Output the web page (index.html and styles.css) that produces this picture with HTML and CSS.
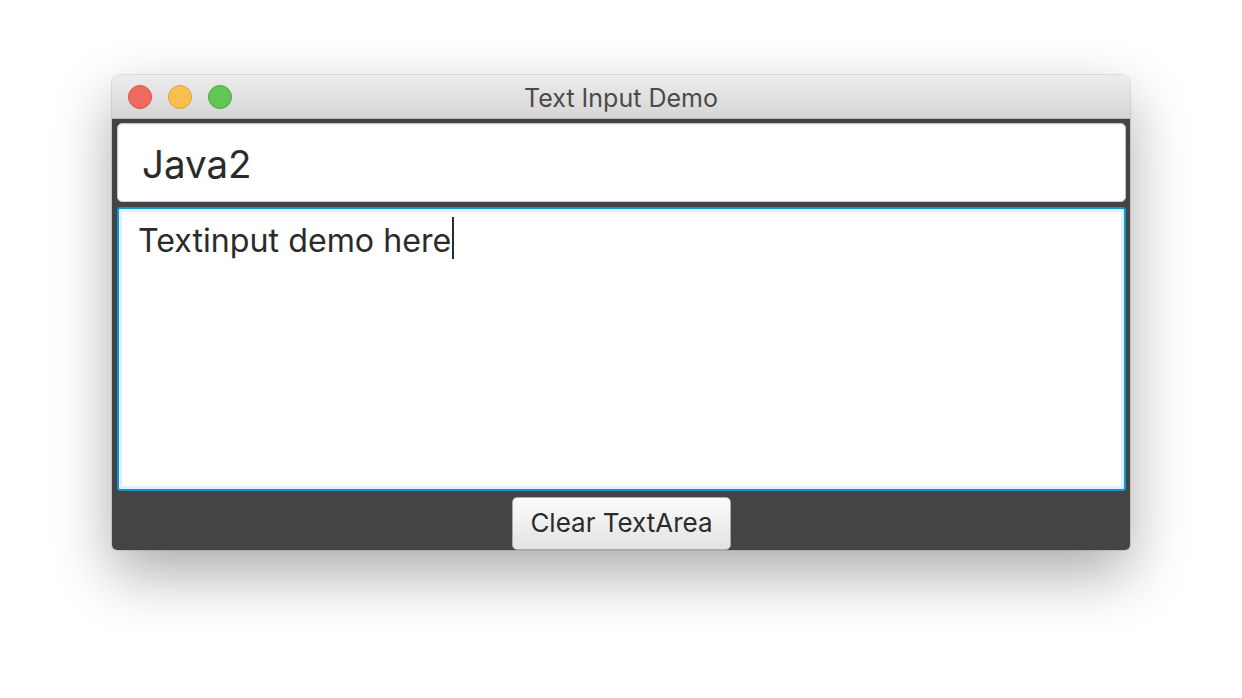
FILE: index.html
```html
<!DOCTYPE html>
<html>
<head>
<meta charset="utf-8">
<link rel="stylesheet" href="styles.css">
</head>
<body>
<div class="window">
  <div class="titlebar">
    <div class="lights">
      <span class="light red"></span>
      <span class="light yellow"></span>
      <span class="light green"></span>
    </div>
    <div class="title">Text Input Demo</div>
    <div></div>
  </div>
  <div class="content">
    <div class="field">Java2</div>
    <div class="area"><span class="areatext">Textinput demo here</span><span class="caret"></span></div>
    <div class="buttons">
      <button class="btn">Clear TextArea</button>
    </div>
  </div>
</div>
</body>
</html>
```

FILE: styles.css
```css
html, body {
  margin: 0;
  padding: 0;
  background: #ffffff;
}
body {
  width: 1242px;
  height: 698px;
  overflow: hidden;
  padding: 75px 0 0 112px;
  box-sizing: border-box;
  font-family: Inter, "Noto Sans", sans-serif;
}
.window {
  width: 1018px;
  height: 475px;
  border-radius: 8px 8px 5px 5px;
  overflow: hidden;
  box-shadow: 0 24px 60px rgba(0, 0, 0, 0.33), 0 0 0 1px rgba(0, 0, 0, 0.10);
  display: flex;
  flex-direction: column;
}
.titlebar {
  height: 46px;
  box-sizing: border-box;
  background: linear-gradient(#ececec, #d6d6d6);
  border-bottom: 1px solid #b4b4b4;
  display: grid;
  grid-template-columns: 1fr auto 1fr;
  align-items: center;
}
.lights {
  display: flex;
  gap: 16px;
  padding-left: 16px;
  padding-top: 1px;
}
.light {
  width: 24px;
  height: 24px;
  border-radius: 50%;
  box-sizing: border-box;
}
.red { background: #ee6a5f; border: 1px solid #d8534a; }
.yellow { background: #f6bf4f; border: 1px solid #dfa13a; }
.green { background: #62c655; border: 1px solid #4fa942; }
.title {
  font-size: 25px;
  color: #4a4a4a;
  padding-top: 3px;
}
.content {
  flex: 1;
  background: #444444;
  padding: 4px 4px 0 5px;
  display: flex;
  flex-direction: column;
  gap: 5px;
}
.field {
  height: 79px;
  box-sizing: border-box;
  background: #ffffff;
  border: 1px solid #c6c6c6;
  border-radius: 5px;
  box-shadow: inset 0 1px 2px rgba(0, 0, 0, 0.08);
  display: flex;
  align-items: center;
  padding-left: 24px;
  padding-top: 2px;
  font-size: 38.5px;
  color: #2b2b2b;
}
.area {
  height: 284px;
  box-sizing: border-box;
  background: #ffffff;
  border: 2px solid #0b97d3;
  border-radius: 3px;
  box-shadow: inset 0 0 0 3px #dcf1fa;
  padding: 12px 0 0 19px;
  display: flex;
  align-items: flex-start;
  font-size: 32.2px;
  color: #2b2b2b;
}
.areatext {
  line-height: 40px;
}
.caret {
  width: 2px;
  height: 42px;
  background: #2b2b2b;
  margin-top: -4px;
  margin-left: 1px;
}
.buttons {
  display: flex;
  justify-content: center;
  padding-top: 1px;
}
.btn {
  width: 219px;
  height: 53px;
  box-sizing: border-box;
  border: 1px solid #a9a9a9;
  border-radius: 5px;
  background: linear-gradient(#fbfbfb, #e3e3e3);
  font-family: Inter, "Noto Sans", sans-serif;
  font-size: 26px;
  color: #2b2b2b;
  padding: 0 0 2px 0;
}
```
